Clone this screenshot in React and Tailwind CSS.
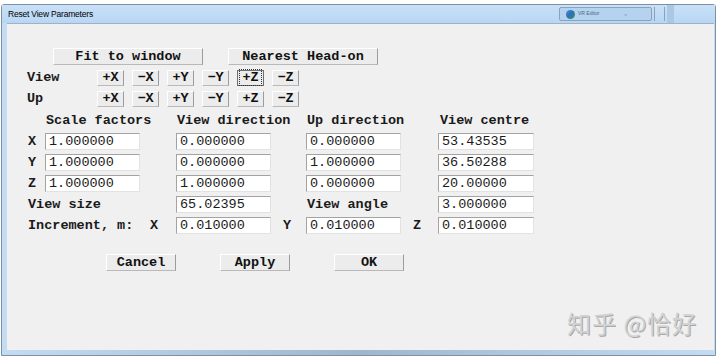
import React from "react";

const mono = "font-['Liberation_Mono','Courier_New',monospace]";

const Btn = ({ children, className = "", pressed = false }) => (
  <div
    className={`flex items-center justify-center whitespace-nowrap ${mono} font-bold text-[13.5px] leading-none text-[#111] bg-[#ececec] border ${
      pressed
        ? "border-[#6f6f6f]"
        : "border-t-white border-l-white border-r-[#9c9c9c] border-b-[#b9b9b9]"
    } ${className}`}
  >
    {pressed ? (
      <span className="px-[2px] py-[1px] outline outline-1 outline-dotted outline-[#333]">{children}</span>
    ) : (
      children
    )}
  </div>
);

const Field = ({ value, w = "w-[95px]" }) => (
  <div
    className={`${w} h-[17px] flex items-center pl-[3px] bg-white border border-t-[#a3a3a3] border-l-[#a3a3a3] border-r-[#e2e2e2] border-b-[#e2e2e2] ${mono} text-[13.5px] leading-none text-[#1a1a1a]`}
  >
    {value}
  </div>
);

const Label = ({ children, className = "" }) => (
  <div className={`${mono} font-bold text-[13.5px] leading-none text-[#1a1a1a] whitespace-nowrap flex items-center h-[17px] ${className}`}>
    {children}
  </div>
);

const axes = ["+X", "-X", "+Y", "-Y", "+Z", "-Z"];

const rows = [
  ["X", "1.000000", "0.000000", "0.000000", "53.43535"],
  ["Y", "1.000000", "0.000000", "1.000000", "36.50288"],
  ["Z", "1.000000", "1.000000", "0.000000", "20.00000"],
];

export default function App() {
  return (
    <div className="w-[720px] h-[360px] bg-white pt-[4px] pl-[1px] relative overflow-hidden">
      {/* window frame */}
      <div className="w-[715px] h-[352px] flex flex-col border border-[#7d90a6] bg-[#c3dcf4] rounded-t-[3px]">
        {/* title bar */}
        <div className="h-[18px] flex items-center pl-[6px] bg-gradient-to-b from-[#c9e1f7] to-[#b8d6f3]">
          <span className="font-['Liberation_Sans',Arial,sans-serif] text-[8.5px] text-black tracking-[-0.2px] pt-[1px]">
            Reset View Parameters
          </span>
          <div className="ml-auto flex items-center h-full">
            <div className="w-[93px] h-[14px] flex items-center gap-[3px] pl-[6px] border border-[#8aa3bd] bg-[#b5d2ee] rounded-[2px]">
              <div className="w-[9px] h-[9px] rounded-full bg-gradient-to-br from-[#3a8ee0] via-[#2f6fb5] to-[#3e9b3a]" />
              <span className="font-['Liberation_Sans',Arial,sans-serif] text-[5px] text-[#4b6a8a]">VR Editor</span>
              <span className="ml-[22px] text-[7px] leading-none text-[#6b829c]">▫</span>
            </div>
            <div className="w-px h-[14px] bg-[#8ba2ba] ml-[2px]" />
            <div className="w-px h-[14px] bg-[#8ba2ba] ml-[9px]" />
            <div className="w-[7px] h-full bg-[#a9c8e6] ml-[2px]" />
            <div className="w-[41px]" />
          </div>
        </div>

        {/* client area */}
        <div className="flex-1 ml-[5px] mr-[1px] bg-[#f0f0f0] border-t border-[#9fb3c8] flex flex-col pl-[20px]">
          {/* top buttons */}
          <div className="flex mt-[24px] pl-[26px] gap-[25px]">
            <Btn className="w-[150px] h-[17px]">Fit to window</Btn>
            <Btn className="w-[150px] h-[17px]">Nearest Head-on</Btn>
          </div>

          {/* View / Up rows */}
          {["View", "Up"].map((name) => (
            <div key={name} className="flex items-center mt-[4px]">
              <Label className="w-[70px] h-[16px]">{name}</Label>
              <div className="flex gap-[8px]">
                {axes.map((a) => (
                  <Btn key={a} className="w-[27px] h-[16px]" pressed={name === "View" && a === "+Z"}>
                    {a.replace("-", "−")}
                  </Btn>
                ))}
              </div>
            </div>
          ))}

          {/* fields grid */}
          <div className="grid grid-cols-[18px_95px_36px_95px_35px_95px_37px_96px] gap-y-[4px] mt-[5px] w-fit">
            <div />
            <Label className="pl-[1px]">Scale factors</Label>
            <div />
            <Label className="pl-[1px]">View direction</Label>
            <div />
            <Label className="pl-[1px]">Up direction</Label>
            <div />
            <Label className="pl-[2px]">View centre</Label>

            {rows.map(([axis, a, b, c, d]) => (
              <React.Fragment key={axis}>
                <Label className="pl-[1px]">{axis}</Label>
                <Field value={a} />
                <div />
                <Field value={b} />
                <div />
                <Field value={c} />
                <div />
                <Field value={d} w="w-[96px]" />
              </React.Fragment>
            ))}

            <Label className="col-span-3 pl-[1px]">View size</Label>
            <Field value="65.02395" />
            <div />
            <Label className="pl-[1px]">View angle</Label>
            <div />
            <Field value="3.000000" w="w-[96px]" />

            <Label className="col-span-2 pl-[1px]">Increment, m:</Label>
            <Label className="pl-[10px]">X</Label>
            <Field value="0.010000" />
            <Label className="pl-[12px]">Y</Label>
            <Field value="0.010000" />
            <Label className="pl-[12px]">Z</Label>
            <Field value="0.010000" w="w-[96px]" />
          </div>

          {/* bottom buttons */}
          <div className="flex mt-[20px] pl-[79px] gap-[44px]">
            <Btn className="w-[70px] h-[17px]">Cancel</Btn>
            <Btn className="w-[70px] h-[17px]">Apply</Btn>
            <Btn className="w-[70px] h-[17px]">OK</Btn>
          </div>
        </div>

        {/* bottom frame */}
        <div className="h-[5px] bg-gradient-to-r from-[#c3dcf4] via-[#9fb6cf] to-[#c3dcf4]" />
      </div>

      {/* watermark */}
      <div className="absolute left-[567px] top-[311px] font-['Noto_Sans_CJK_SC',sans-serif] text-[24px] tracking-[1px] leading-none text-[#d2d2d2] [text-shadow:1px_1px_0_#a8a8a8]">
        知乎 @恰好
      </div>
    </div>
  );
}
